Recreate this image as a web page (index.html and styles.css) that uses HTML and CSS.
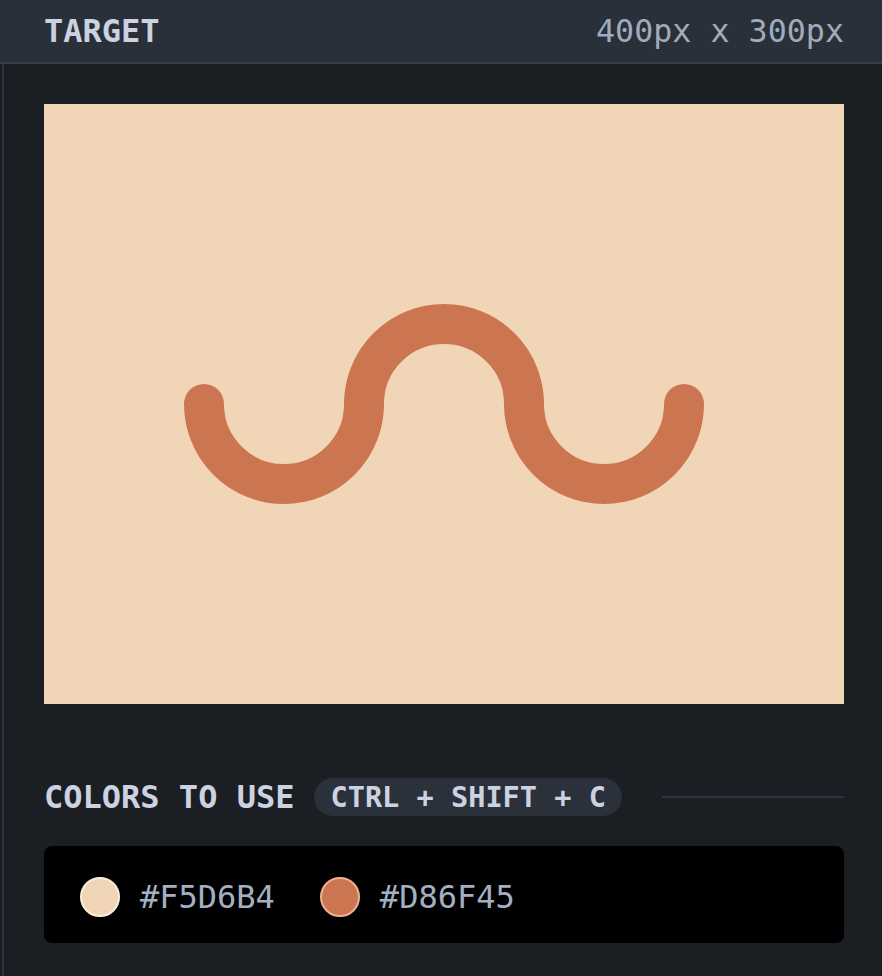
FILE: index.html
```html
<!DOCTYPE html>
<html>
<head>
<meta charset="utf-8">
<link rel="stylesheet" href="styles.css">
</head>
<body>
<header class="head">
  <span class="title">TARGET</span>
  <span class="size">400px x 300px</span>
</header>
<main class="panel">
  <div class="canvas">
    <svg class="shape" viewBox="0 0 800 600" width="800" height="600">
      <path d="M160 300 A80 80 0 0 0 320 300 A80 80 0 0 1 480 300 A80 80 0 0 0 640 300" fill="none" stroke="#cc7551" stroke-width="40" stroke-linecap="round"/>
    </svg>
  </div>
  <div class="colors-head">
    <span class="label">COLORS TO USE</span>
    <span class="pill">CTRL + SHIFT + C</span>
    <span class="rule"></span>
  </div>
  <div class="swatches">
    <div class="swatch"><span class="dot dot-light"></span><span class="hex">#F5D6B4</span></div>
    <div class="swatch"><span class="dot dot-orange"></span><span class="hex">#D86F45</span></div>
  </div>
</main>
</body>
</html>
```
FILE: styles.css
```css
html, body {
  margin: 0;
  padding: 0;
  background: #1b1f23;
  font-family: "DejaVu Sans Mono", "Liberation Mono", monospace;
}
.head {
  height: 62px;
  background: #29303a;
  border-bottom: 2px solid #343c46;
  display: flex;
  align-items: center;
  justify-content: space-between;
  padding: 0 38px 0 44px;
}
.title {
  font-size: 32px;
  font-weight: bold;
  color: #ccd2e0;
}
.size {
  font-size: 31.7px;
  color: #a0abbd;
}
.panel {
  margin-left: 2px;
  border-left: 2px solid #2c333c;
  padding: 40px 38px 0 40px;
  height: 912px;
  box-sizing: border-box;
}
.canvas {
  width: 800px;
  height: 600px;
  background: #f0d6b6;
}
.shape {
  display: block;
}
.colors-head {
  display: flex;
  align-items: center;
  margin-top: 74px;
  height: 38px;
}
.label {
  font-size: 32px;
  font-weight: bold;
  color: #ccd2e0;
  margin-right: 20px;
}
.pill {
  background: #2a313a;
  height: 38px;
  border-radius: 19px;
  padding: 0 16px;
  display: flex;
  align-items: center;
  font-size: 28.6px;
  font-weight: bold;
  color: #ccd2e0;
}
.rule {
  flex: 1;
  height: 2px;
  background: #2e353e;
  margin-left: 40px;
}
.swatches {
  margin-top: 30px;
  background: #000;
  border-radius: 8px;
  display: flex;
  align-items: center;
  gap: 45px;
  padding: 31px 36px 26px;
}
.swatch {
  display: flex;
  align-items: center;
  gap: 20px;
}
.dot {
  width: 40px;
  height: 40px;
  border-radius: 50%;
  box-sizing: border-box;
}
.dot-light {
  background: #f0d6b6;
  border: 2px solid #f9eddc;
}
.dot-orange {
  background: #cc7551;
  border: 2px solid #eeb293;
}
.hex {
  font-size: 32px;
  line-height: 40px;
  color: #a3afc2;
}
```
